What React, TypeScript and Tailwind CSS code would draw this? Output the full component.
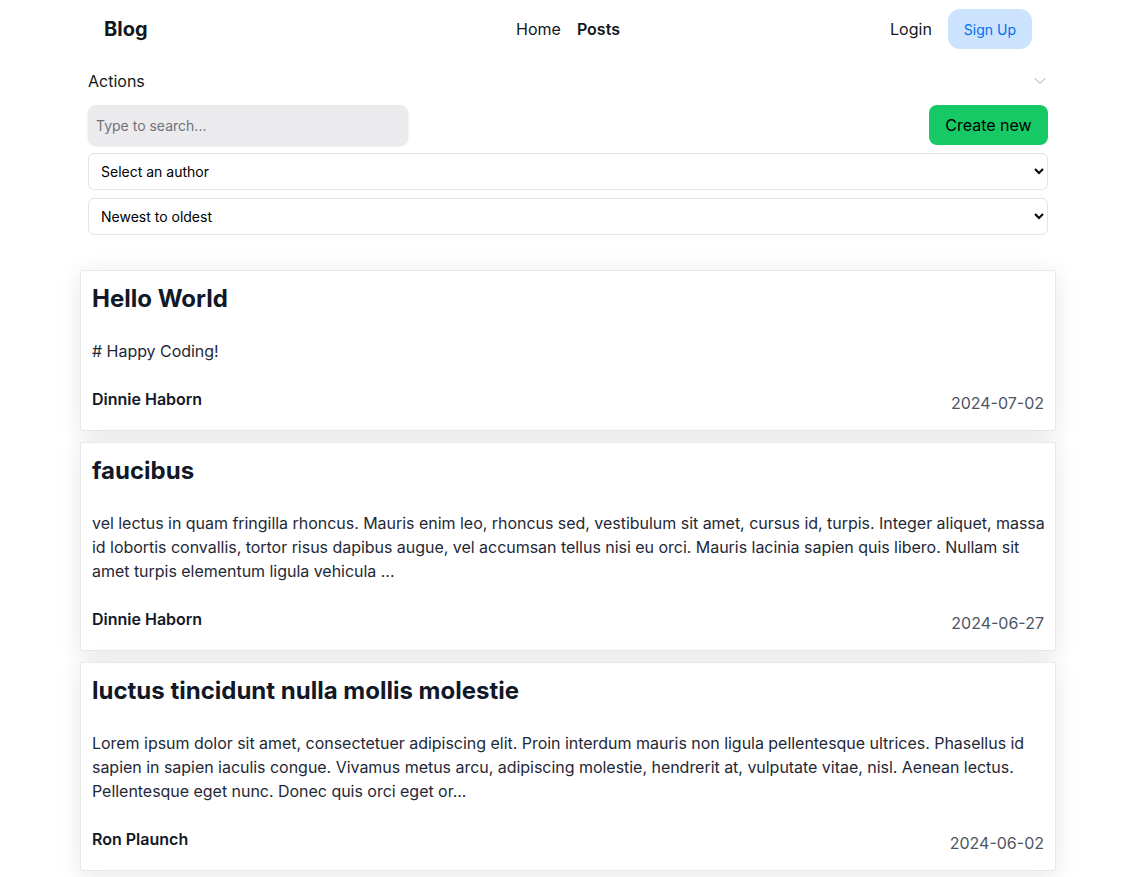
import React from "react";

const posts = [
  {
    title: "Hello World",
    body: "# Happy Coding!",
    author: "Dinnie Haborn",
    date: "2024-07-02",
  },
  {
    title: "faucibus",
    body: "vel lectus in quam fringilla rhoncus. Mauris enim leo, rhoncus sed, vestibulum sit amet, cursus id, turpis. Integer aliquet, massa id lobortis convallis, tortor risus dapibus augue, vel accumsan tellus nisi eu orci. Mauris lacinia sapien quis libero. Nullam sit amet turpis elementum ligula vehicula ...",
    author: "Dinnie Haborn",
    date: "2024-06-27",
  },
  {
    title: "luctus tincidunt nulla mollis molestie",
    body: "Lorem ipsum dolor sit amet, consectetuer adipiscing elit. Proin interdum mauris non ligula pellentesque ultrices. Phasellus id sapien in sapien iaculis congue. Vivamus metus arcu, adipiscing molestie, hendrerit at, vulputate vitae, nisl. Aenean lectus. Pellentesque eget nunc. Donec quis orci eget or...",
    author: "Ron Plaunch",
    date: "2024-06-02",
  },
];

export default function App() {
  return (
    <div
      className="w-[1136px] bg-white text-[#11181c]"
      style={{ fontFamily: "Inter, 'Noto Sans', sans-serif" }}
    >
      <nav className="h-[58px] w-[960px] mx-auto px-4 flex items-center justify-between">
        <div className="w-[220px] text-[20px] font-bold text-[#11181c]">Blog</div>
        <div className="flex items-center gap-4 text-[16px]">
          <span className="text-[#11181c]">Home</span>
          <span className="font-semibold text-[#11181c]">Posts</span>
        </div>
        <div className="w-[220px] flex items-center justify-end gap-4">
          <span className="text-[16px] text-[#11181c]">Login</span>
          <button className="h-10 px-4 rounded-xl bg-[#cce3fd] text-[#006fee] text-[14px]">
            Sign Up
          </button>
        </div>
      </nav>

      <section className="w-[960px] mx-auto">
        <div className="h-[24px] mt-[11px] flex items-center justify-between">
          <span className="text-[16px] text-[#11181c]">Actions</span>
          <svg width="12" height="12" viewBox="0 0 24 24" fill="none" className="mr-[2px]">
            <path d="M2 7l10 10 10-10" stroke="#a1a1aa" strokeWidth="2" strokeLinecap="round" strokeLinejoin="round" />
          </svg>
        </div>
        <div className="mt-3 flex items-center justify-between">
          <div className="w-[320px] h-10 rounded-lg bg-[#ebebee] shadow-sm flex items-center px-2">
            <input
              className="w-full bg-transparent outline-none text-[14px] placeholder:text-[#71717a]"
              placeholder="Type to search..."
            />
          </div>
          <button className="h-10 w-[119px] rounded-lg bg-[#17c964] text-[16px] text-black">
            Create new
          </button>
        </div>
        <select className="mt-2 w-full h-[37px] rounded-md border border-[#e4e4e7] bg-white px-2 text-[14px] text-black">
          <option>Select an author</option>
        </select>
        <select className="mt-2 w-full h-[37px] rounded-md border border-[#e4e4e7] bg-white px-2 text-[14px] text-black">
          <option>Newest to oldest</option>
        </select>
      </section>

      <div className="w-[976px] mx-auto mt-[35px] flex flex-col gap-[11px] pb-6">
        {posts.map((p) => (
          <article
            key={p.title + p.date}
            className="bg-white border border-[#e8e8e8] rounded-[2px] shadow-[0_4px_24px_rgba(0,0,0,0.10)] pl-[11px] pr-[11px] pt-[12px] pb-[15px]"
          >
            <h2 className="text-[24px] leading-[32px] font-bold text-[#111827]">{p.title}</h2>
            <p className="mt-6 -mr-[4px] text-[16px] leading-[24px] text-[#1f2937] tracking-[-0.03px]">{p.body}</p>
            <div className="mt-6 flex items-end justify-between">
              <span className="mb-1 text-[16px] leading-[24px] font-semibold text-[#111827]">
                {p.author}
              </span>
              <span className="text-[16px] leading-[24px] text-[#4b5563]">{p.date}</span>
            </div>
          </article>
        ))}
      </div>
    </div>
  );
}
